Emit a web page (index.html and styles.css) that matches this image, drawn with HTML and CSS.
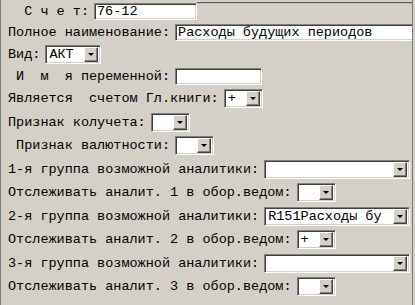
FILE: index.html
```html
<!DOCTYPE html>
<html lang="ru">
<head>
    <meta charset="UTF-8">
    <title>Счет</title>
    <link rel="stylesheet" href="styles.css">
</head>
<body>
    <div class="card">
        <div class="row first">
            <span class="lbl">  С ч е т:</span>
            <span class="edit w-schet">76-12</span>
            <span class="rule"></span>
        </div>
        <div class="row tall">
            <span class="lbl">Полное наименование:</span>
            <span class="edit w-name">Расходы будущих периодов</span>
        </div>
        <div class="row tall">
            <span class="lbl">Вид:</span>
            <span class="combo w-vid"><span class="val">АКТ</span><span class="btn"><i class="arrow"></i></span></span>
        </div>
        <div class="row tall">
            <span class="lbl"> И  м  я переменной:</span>
            <span class="edit w-var"></span>
        </div>
        <div class="row">
            <span class="lbl">Является  счетом Гл.книги:</span>
            <span class="combo w-small"><span class="val">+</span><span class="btn"><i class="arrow"></i></span></span>
        </div>
        <div class="row">
            <span class="lbl">Признак колучета:</span>
            <span class="combo w-small"><span class="val"></span><span class="btn"><i class="arrow"></i></span></span>
        </div>
        <div class="row">
            <span class="lbl"> Признак валютности:</span>
            <span class="combo w-small"><span class="val"></span><span class="btn"><i class="arrow"></i></span></span>
        </div>
        <div class="row">
            <span class="lbl">1-я группа возможной аналитики:</span>
            <span class="combo w-group"><span class="val"></span><span class="btn"><i class="arrow"></i></span></span>
        </div>
        <div class="row">
            <span class="lbl">Отслеживать аналит. 1 в обор.ведом:</span>
            <span class="combo w-small"><span class="val"></span><span class="btn"><i class="arrow"></i></span></span>
        </div>
        <div class="row">
            <span class="lbl">2-я группа возможной аналитики:</span>
            <span class="combo w-group"><span class="val">R151Расходы бу</span><span class="btn"><i class="arrow"></i></span></span>
        </div>
        <div class="row">
            <span class="lbl">Отслеживать аналит. 2 в обор.ведом:</span>
            <span class="combo w-small"><span class="val">+</span><span class="btn"><i class="arrow"></i></span></span>
        </div>
        <div class="row">
            <span class="lbl">3-я группа возможной аналитики:</span>
            <span class="combo w-group"><span class="val"></span><span class="btn"><i class="arrow"></i></span></span>
        </div>
        <div class="row">
            <span class="lbl">Отслеживать аналит. 3 в обор.ведом:</span>
            <span class="combo w-small"><span class="val"></span><span class="btn"><i class="arrow"></i></span></span>
        </div>
    </div>
</body>
</html>
```
FILE: styles.css
```css
body {
    margin: 0;
    background-color: #d4d0c8;
    font-family: "Liberation Mono", "Courier New", monospace;
    font-size: 13.5px;
    color: #000;
}
.card {
    width: 413px;
    height: 305px;
    box-sizing: border-box;
    padding: 1px 0 0 7px;
    border-left: 1px solid #7a7a7a;
    border-right: 1px solid #7a7a7a;
    overflow: hidden;
}
.row {
    display: flex;
    align-items: center;
    height: 23.5px;
}
.row.first {
    height: 20px;
}
.row.tall {
    height: 22px;
}
.lbl {
    white-space: pre;
    margin-right: 5px;
}
.rule {
    flex: 1;
    align-self: flex-start;
    margin: 1px -1px 0 0;
    border-top: 1px solid #5c5c5c;
    border-bottom: 1px solid #c0bcb4;
}
.edit, .combo {
    display: flex;
    align-items: center;
    box-sizing: border-box;
    background-color: #fff;
    border: 1px solid;
    border-color: #808080 #fff #fff #808080;
    box-shadow: inset 1px 1px #404040, inset -1px -1px #d4d0c8;
    white-space: pre;
    overflow: hidden;
}
.edit {
    height: 17px;
    padding-left: 2px;
}
.combo {
    height: 19px;
    padding: 2px;
}
.val {
    flex: 1;
    padding-left: 1px;
    overflow: hidden;
}
.btn {
    display: flex;
    align-items: center;
    justify-content: center;
    width: 12px;
    height: 13px;
    background-color: #d4d0c8;
    border: 1px solid;
    border-color: #fff #404040 #404040 #fff;
    box-shadow: inset -1px -1px #808080;
}
.arrow {
    width: 0;
    height: 0;
    border-left: 3px solid transparent;
    border-right: 3px solid transparent;
    border-top: 3px solid #000;
}
.w-schet { width: 103px; }
.w-name { width: 240px; margin-right: -6px; }
.w-vid { width: 56px; }
.w-var { width: 87px; }
.w-small { width: 39px; }
.w-group { width: 146px; }
```
